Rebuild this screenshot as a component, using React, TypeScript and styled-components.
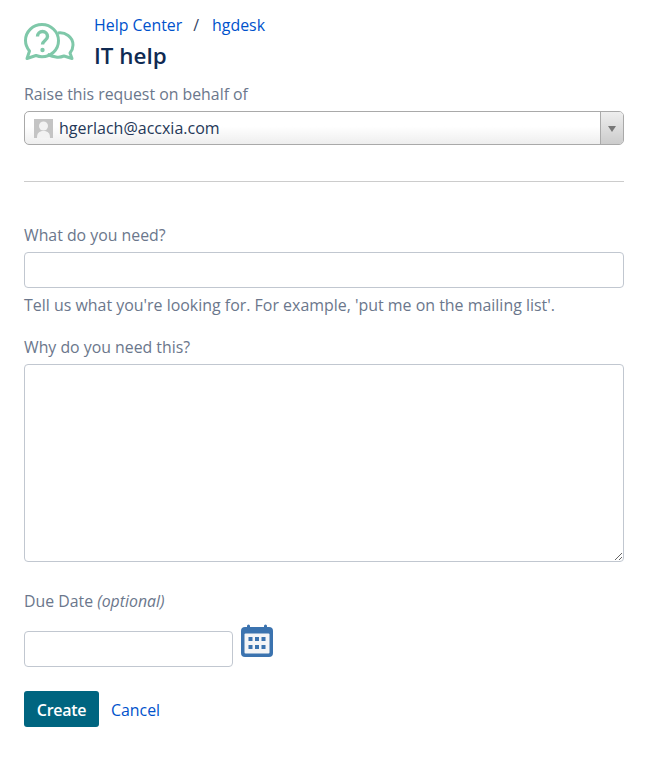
import React from 'react';
import styled, { createGlobalStyle } from 'styled-components';

const GlobalStyle = createGlobalStyle`
  html, body {
    margin: 0;
    padding: 0;
    background: #fff;
    font-family: "Open Sans", "Noto Sans", sans-serif;
  }
  * { box-sizing: border-box; }
`;

const Page = styled.div`
  width: 600px;
  margin-left: 24px;
  padding-top: 15px;
  height: 778px;
`;

const Header = styled.header`
  display: flex;
  align-items: flex-start;
  gap: 19px;
`;

const LogoWrap = styled.div`
  width: 51px;
  height: 40px;
  margin-top: 8px;
`;

const Crumbs = styled.nav`
  font-size: 15.9px;
  line-height: 20px;
  color: #344563;
`;

const CrumbLink = styled.a`
  color: #0052cc;
  text-decoration: none;
  font-size: 15.9px;
`;

const CrumbSep = styled.span`
  margin: 0 13px 0 11px;
`;

const Title = styled.h1`
  margin: 7px 0 0;
  font-size: 22.4px;
  line-height: 28px;
  font-weight: 600;
  color: #0f2a52;
`;

const Label = styled.label`
  display: block;
  font-size: 15.85px;
  line-height: 20px;
  color: #6b778c;
`;

const OnBehalf = styled.div`
  margin-top: 14px;
`;

const Select = styled.div`
  margin-top: 7px;
  height: 34px;
  display: flex;
  align-items: stretch;
  border: 1px solid #a9a9a9;
  border-radius: 5px;
  background: linear-gradient(#ffffff 45%, #eeeeee 100%);
  overflow: hidden;
`;

const SelectValue = styled.div`
  flex: 1;
  display: flex;
  align-items: center;
  gap: 6px;
  padding-left: 9px;
  font-size: 16px;
  color: #253858;
`;

const SelectArrow = styled.div`
  width: 23px;
  border-left: 1px solid #aaaaaa;
  background: linear-gradient(#eeeeee, #cccccc);
  display: flex;
  align-items: center;
  justify-content: center;
`;

const Caret = styled.span`
  width: 0;
  height: 0;
  margin-top: 1px;
  border-left: 4px solid transparent;
  border-right: 4px solid transparent;
  border-top: 6px solid #777777;
`;

const Divider = styled.hr`
  margin: 36px 0 0;
  border: 0;
  border-top: 1px solid #cccccc;
`;

const Field = styled.div<{ $top: number }>`
  margin-top: ${(p) => p.$top}px;
`;

const TextInput = styled.input<{ $width?: number; $gap?: number }>`
  display: block;
  margin-top: ${(p) => p.$gap ?? 7}px;
  width: ${(p) => (p.$width ? `${p.$width}px` : '100%')};
  height: 36px;
  border: 1px solid #c1c7d0;
  border-radius: 4px;
  background: #fff;
`;

const TextArea = styled.textarea`
  display: block;
  margin-top: 7px;
  width: 100%;
  height: 198px;
  border: 1px solid #c1c7d0;
  border-radius: 4px;
  background: #fff;
`;

const Help = styled.div`
  margin-top: 7px;
  font-size: 15.95px;
  line-height: 20px;
  color: #6b778c;
`;

const DateRow = styled.div`
  display: flex;
  align-items: flex-start;
  gap: 7px;
  margin-top: 20px;
`;

const CalendarWrap = styled.div`
  width: 34px;
  height: 34px;
  margin-top: -7px;
`;

const Actions = styled.div`
  margin-top: 24px;
  display: flex;
  align-items: center;
  gap: 12px;
`;

const CreateButton = styled.button`
  width: 75px;
  height: 36px;
  padding: 1px 0 0;
  border: 0;
  border-radius: 3px;
  background: #006580;
  color: #fff;
  font-family: inherit;
  font-size: 16px;
  font-weight: 600;
  letter-spacing: -0.3px;
`;

const CancelLink = styled(CrumbLink)`
  margin-top: 2px;
`;

const Optional = styled.em`
  font-style: italic;
`;

const BubbleLogo = () => (
  <svg width="51" height="40" viewBox="0 0 51 40" fill="none" stroke="#7fc8a9" strokeWidth="3" strokeLinejoin="round">
    <path d="M18 1.500C9 1.500 1.500 8.500 1.500 17.500c0 4 1.500 7.500 4 10.500l-2.500 7.500 9-3c2 .8 4 1.200 6 1.200 9 0 16.500-7 16.500-16S27 1.500 18 1.500z" />
    <path d="M34 10c7-1 15 3.500 15 12 0 3-1 5.500-3 8l2 5.500-8-2.500c-3 1.200-5.500 1.500-8 1-3-.4-6-1.500-8.500-2.500" />
    <path d="M13.500 13.500c0-3 2.300-5 5-5s5 2 5 5c0 4-5 4-5 8" strokeWidth="3.400" />
    <circle cx="18.500" cy="27" r="2.200" fill="#7fc8a9" stroke="none" />
  </svg>
);

const AvatarIcon = () => (
  <svg width="19" height="19" viewBox="0 0 19 19">
    <rect width="19" height="19" fill="#c4c4c4" />
    <circle cx="9.500" cy="7" r="4.500" fill="#f2f2f2" />
    <path d="M3 19c0-5 2-7 6.500-7s6.500 2 6.500 7z" fill="#f2f2f2" />
  </svg>
);

const CalendarIcon = () => (
  <svg width="34" height="34" viewBox="0 0 34 34">
    <rect x="1" y="3" width="32" height="30" rx="4" fill="#3b73af" />
    <rect x="7" y="0.500" width="3" height="6" rx="1.500" fill="#3b73af" />
    <rect x="24" y="0.500" width="3" height="6" rx="1.500" fill="#3b73af" />
    <rect x="4.500" y="9.500" width="25" height="20" rx="1" fill="#f4f5f7" />
    {[8.500, 15, 21.500].map((x) =>
      [13, 21].map((y) => <rect key={`${x}-${y}`} x={x} y={y} width="4" height="4" fill="#3b73af" />)
    )}
  </svg>
);

export default function App() {
  return (
    <>
      <GlobalStyle />
      <Page>
        <Header>
          <LogoWrap>
            <BubbleLogo />
          </LogoWrap>
          <div>
            <Crumbs>
              <CrumbLink href="#">Help Center</CrumbLink>
              <CrumbSep>/</CrumbSep>
              <CrumbLink href="#">hgdesk</CrumbLink>
            </Crumbs>
            <Title>IT help</Title>
          </div>
        </Header>

        <OnBehalf>
          <Label>Raise this request on behalf of</Label>
          <Select>
            <SelectValue>
              <AvatarIcon />
              hgerlach@accxia.com
            </SelectValue>
            <SelectArrow>
              <Caret />
            </SelectArrow>
          </Select>
        </OnBehalf>

        <Divider />

        <Field $top={43}>
          <Label>What do you need?</Label>
          <TextInput type="text" />
          <Help>Tell us what you're looking for. For example, 'put me on the mailing list'.</Help>
        </Field>

        <Field $top={22}>
          <Label>Why do you need this?</Label>
          <TextArea />
        </Field>

        <Field $top={29}>
          <Label>
            Due Date <Optional>(optional)</Optional>
          </Label>
          <DateRow>
            <TextInput $width={209} $gap={0} type="text" />
            <CalendarWrap>
              <CalendarIcon />
            </CalendarWrap>
          </DateRow>
        </Field>

        <Actions>
          <CreateButton>Create</CreateButton>
          <CancelLink href="#">Cancel</CancelLink>
        </Actions>
      </Page>
    </>
  );
}
